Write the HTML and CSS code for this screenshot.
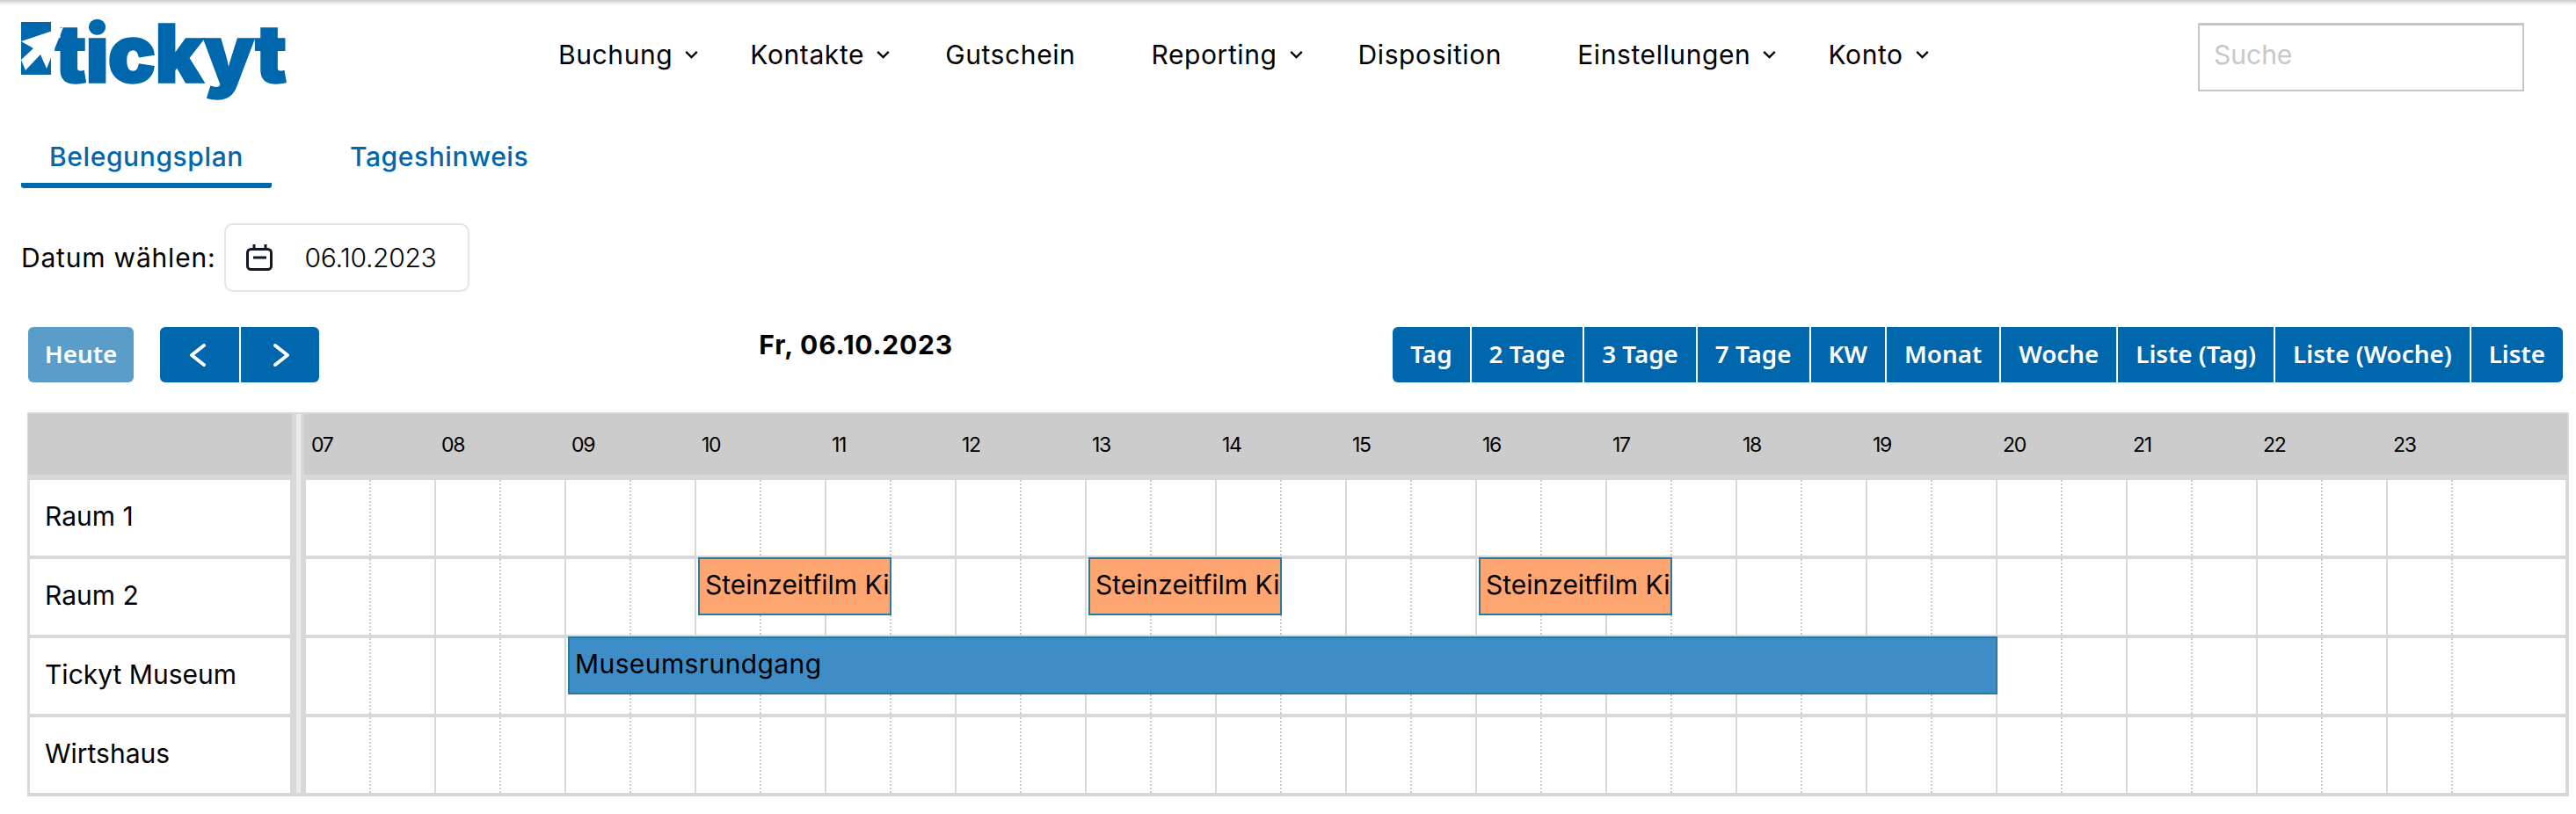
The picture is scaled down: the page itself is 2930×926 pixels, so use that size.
FILE: index.html
```html
<!DOCTYPE html>
<html lang="de">
<head>
  <meta charset="UTF-8" />
  <title>Belegungsplan</title>
  <link rel="stylesheet" href="styles.css">
</head>
<body>

  <header class="topbar">
    <a class="logo">
      <svg class="logo-mark" width="50" height="62" viewBox="0 0 50 62">
        <rect x="0" y="4" width="34" height="60" fill="#0067ac"/>
        <path d="M48 10 L0 26 L14 34 L0 47 L5 59 L22 41 L29 57 Z" fill="#fff"/>
      </svg>
      <span class="logo-text">tickyt</span>
    </a>

    <nav class="mainnav">
      <a class="navitem">Buchung <svg class="chev" viewBox="0 0 12 8"><path d="M1 1.5 L6 6.5 L11 1.5"/></svg></a>
      <a class="navitem">Kontakte <svg class="chev" viewBox="0 0 12 8"><path d="M1 1.5 L6 6.5 L11 1.5"/></svg></a>
      <a class="navitem plain">Gutschein</a>
      <a class="navitem">Reporting <svg class="chev" viewBox="0 0 12 8"><path d="M1 1.5 L6 6.5 L11 1.5"/></svg></a>
      <a class="navitem plain">Disposition</a>
      <a class="navitem">Einstellungen <svg class="chev" viewBox="0 0 12 8"><path d="M1 1.5 L6 6.5 L11 1.5"/></svg></a>
      <a class="navitem">Konto <svg class="chev" viewBox="0 0 12 8"><path d="M1 1.5 L6 6.5 L11 1.5"/></svg></a>
    </nav>

    <input class="search" type="text" placeholder="Suche">
  </header>

  <div class="tabs">
    <a class="tab active">Belegungsplan</a>
    <a class="tab">Tageshinweis</a>
  </div>

  <div class="datepick">
    <label>Datum wählen:</label>
    <div class="dateinput">
      <svg class="calicon" width="30" height="30" viewBox="0 0 30 30">
        <rect x="1.5" y="5.5" width="27" height="23" rx="4"/>
        <path d="M9 0 V6 M22 0 V6 M8 15 H23"/>
      </svg>
      <span>06.10.2023</span>
    </div>
  </div>

  <div class="toolbar">
    <div class="toolgroup">
      <button class="btn today">Heute</button>
      <div class="btngroup">
        <button class="btn arrow prev"><svg width="20" height="28" viewBox="0 0 20 28"><path d="M17 3 L3 14 L17 25"/></svg></button>
        <button class="btn arrow next"><svg width="20" height="28" viewBox="0 0 20 28"><path d="M3 3 L17 14 L3 25"/></svg></button>
      </div>
    </div>
    <h2 class="daytitle">Fr, 06.10.2023</h2>
    <div class="btngroup">
      <button class="btn">Tag</button>
      <button class="btn">2 Tage</button>
      <button class="btn">3 Tage</button>
      <button class="btn">7 Tage</button>
      <button class="btn">KW</button>
      <button class="btn">Monat</button>
      <button class="btn">Woche</button>
      <button class="btn">Liste (Tag)</button>
      <button class="btn">Liste (Woche)</button>
      <button class="btn">Liste</button>
    </div>
  </div>

  <div class="plan">
    <div class="splitter"></div>
    <div class="headlabel"></div>
    <div class="headtimes" id="headtimes"></div>

    <div class="resource">Raum 1</div>
    <div class="timerow"></div>

    <div class="resource">Raum 2</div>
    <div class="timerow">
      <div class="event orange" style="left: 446px; width: 220px;">Steinzeitfilm Ki</div>
      <div class="event orange" style="left: 890px; width: 220px;">Steinzeitfilm Ki</div>
      <div class="event orange" style="left: 1334px; width: 220px;">Steinzeitfilm Ki</div>
    </div>

    <div class="resource">Tickyt Museum</div>
    <div class="timerow">
      <div class="event blue" style="left: 298px; width: 1626px;">Museumsrundgang</div>
    </div>

    <div class="resource">Wirtshaus</div>
    <div class="timerow"></div>
  </div>

  <script>
    // hour labels and grid lines, 07 to 23
    const head = document.getElementById('headtimes');
    for (let h = 7; h <= 23; h++) {
      const label = document.createElement('span');
      label.textContent = String(h).padStart(2, '0');
      head.appendChild(label);
    }
    document.querySelectorAll('.timerow').forEach(function (row) {
      const first = row.firstChild;
      for (let h = 7; h <= 23; h++) {
        const hour = document.createElement('div');
        hour.classList.add('hour');
        if (h === 23) hour.classList.add('last');
        hour.innerHTML = '<div class="half"></div>';
        row.insertBefore(hour, first);
      }
    });
  </script>

</body>
</html>
```

FILE: styles.css
```css
body {
  margin: 0;
  font-family: Inter, sans-serif;
  font-size: 30px;
  color: #000;
  background: #fff;
}

.topbar {
  height: 135px;
  display: flex;
  align-items: flex-start;
  box-shadow: inset 0 6px 5px -4px #bbb;
}

.logo {
  display: flex;
  align-items: flex-start;
  margin: 21px 0 0 24px;
  width: 300px;
}

.logo-mark {
  position: relative;
  z-index: 1;
  overflow: visible;
  margin-right: -12px;
}

.logo-text {
  font-family: Inter, sans-serif;
  font-weight: 900;
  font-size: 92px;
  line-height: 80px;
  letter-spacing: -1.8px;
  color: #0067ac;
  -webkit-text-stroke: 1.5px #0067ac;
}

.mainnav {
  display: flex;
  gap: 59px;
  margin: 42px 0 0 311px;
}

.navitem {
  display: flex;
  align-items: center;
  line-height: 40px;
  white-space: pre;
  letter-spacing: 0.6px;
}

.navitem.plain {
  margin: 0 27px 0 4px;
}

.chev {
  width: 15px;
  height: 10px;
  margin-left: 5px;
  fill: none;
  stroke: #000;
  stroke-width: 1.8;
}

.search {
  width: 371px;
  height: 78px;
  box-sizing: border-box;
  margin: 26px 59px 0 auto;
  padding: 0 16px 8px;
  border: 2px solid #c6c6c6;
  border-top-width: 3px;
  font-family: Inter, sans-serif;
  font-size: 30px;
}

.search::placeholder {
  color: #c8c8c8;
}

.tabs {
  display: flex;
  gap: 57px;
  padding-left: 24px;
}

.tab {
  height: 79px;
  box-sizing: border-box;
  padding: 23px 32px 0;
  line-height: 40px;
  color: #0067ac;
  font-weight: 500;
  letter-spacing: 0.6px;
}

.tab.active {
  border-bottom: 6px solid #0067ac;
  border-radius: 0 0 3px 3px;
}

.datepick {
  display: flex;
  align-items: center;
  gap: 10px;
  margin: 40px 0 0 24px;
}

.datepick label {
  letter-spacing: 0.8px;
}

.dateinput {
  width: 279px;
  height: 78px;
  box-sizing: border-box;
  display: flex;
  align-items: center;
  gap: 36px;
  padding-left: 23px;
  border: 2px solid #e4e4e4;
  border-radius: 10px;
  font-weight: 300;
  letter-spacing: -0.3px;
}

.calicon {
  fill: none;
  stroke: #111827;
  stroke-width: 3;
}

.toolbar {
  display: flex;
  justify-content: space-between;
  align-items: flex-start;
  margin-top: 40px;
  padding: 0 15px 0 32px;
}

.toolgroup {
  display: flex;
  gap: 30px;
}

.daytitle {
  margin: 0;
  font-size: 30px;
  line-height: 40px;
  font-weight: 700;
  letter-spacing: 0.8px;
}

.btngroup {
  display: flex;
  gap: 2px;
}

.btn {
  height: 63px;
  padding: 0 20px 4px;
  border: none;
  border-radius: 0;
  background: #0067ac;
  color: #fff;
  font-family: "Noto Sans", sans-serif;
  font-size: 27.8px;
  font-weight: 600;
}

.btngroup .btn:first-child {
  border-radius: 6px 0 0 6px;
}

.btngroup .btn:last-child {
  border-radius: 0 6px 6px 0;
}

.btn.today {
  width: 120px;
  padding: 0 0 4px;
  border-radius: 6px;
  background: #5a9dc9;
}

.btn.arrow {
  width: 89.5px;
  padding: 0;
  display: flex;
  align-items: center;
  justify-content: center;
}

.btn.arrow.prev {
  padding-right: 3px;
}

.btn.arrow.next {
  padding-left: 3px;
}

.btn.arrow svg {
  fill: none;
  stroke: #fff;
  stroke-width: 4;
  stroke-linecap: round;
  stroke-linejoin: round;
}

/* Plan grid */
.plan {
  display: grid;
  grid-template-columns: 300px 14px 1fr;
  grid-template-rows: 71px repeat(4, 86px);
  row-gap: 4px;
  margin: 34px 8px 0 31px;
  padding: 2px 2px 4px 1px;
  background: #d8d8d8;
}

.splitter {
  grid-column: 2;
  grid-row: 1 / span 5;
  margin: 0 4px 0 5px;
  background: #ebebeb;
}

.headlabel {
  grid-column: 1;
  height: 69px;
  background: #ccc;
}

.headtimes {
  grid-column: 3;
  height: 69px;
  display: flex;
  align-items: center;
  padding-left: 8px;
  background: #ccc;
  font-size: 23px;
  letter-spacing: -1.3px;
}

.headtimes span {
  width: 148px;
}

.resource {
  grid-column: 1;
  display: flex;
  align-items: center;
  margin: 0 2px;
  padding: 0 0 4px 17px;
  background: #fff;
}

.timerow {
  grid-column: 3;
  position: relative;
  display: flex;
  margin: 0 2px;
  background: #fff;
}

.hour {
  flex: none;
  width: 148px;
  box-sizing: border-box;
  border-right: 2px solid #d8d8d8;
}

.hour.last {
  flex: 1;
  border-right: none;
}

.half {
  width: 74px;
  height: 100%;
  box-sizing: border-box;
  border-right: 2px dotted #ccc;
}

.event {
  position: absolute;
  top: -2px;
  height: 66px;
  box-sizing: border-box;
  padding-left: 6px;
  overflow: hidden;
  white-space: nowrap;
  line-height: 58px;
}

.event.orange {
  background: #fda671;
  border: 2px solid #2a7a9f;
}

.event.blue {
  background: #3f8dc6;
  border: 2px solid #2a7a9f;
  letter-spacing: 0.4px;
}
```
